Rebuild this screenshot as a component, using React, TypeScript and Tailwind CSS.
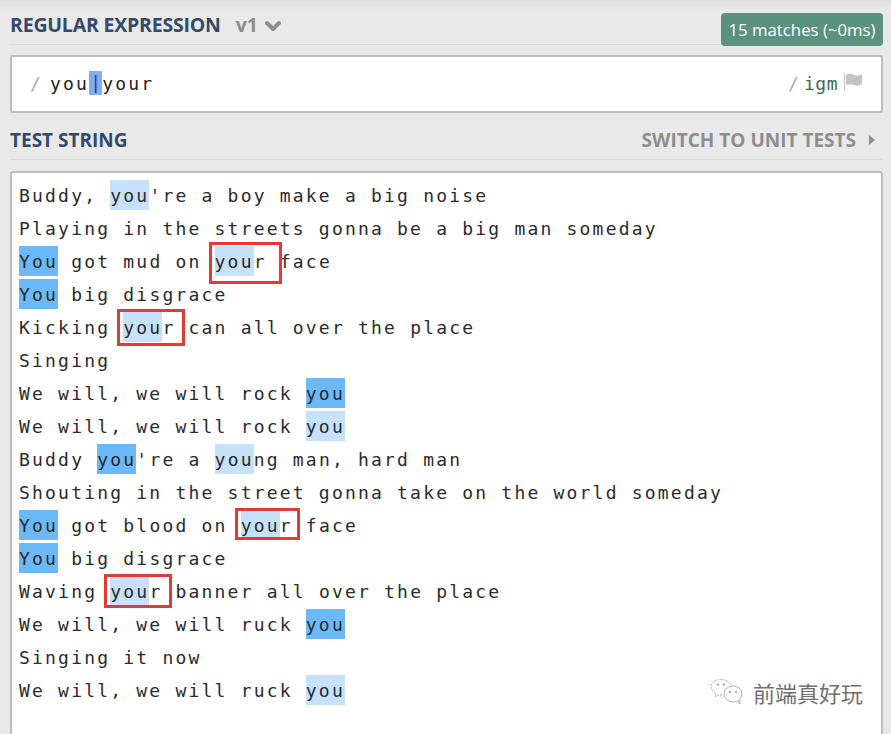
import { ChevronDown } from "lucide-react";
import type { ReactNode } from "react";

function Dark({ children }: { children: ReactNode }) {
  return <span className="inline-block h-[30px] bg-[#6cb9f9] pt-[1px] leading-[29px]">{children}</span>;
}

function Light({ children }: { children: ReactNode }) {
  return <span className="inline-block h-[30px] bg-[#c5e1fb] pt-[1px] leading-[29px]">{children}</span>;
}

// red annotation drawn over the match
function Marked({ children, box }: { children: ReactNode; box: string }) {
  return (
    <span className="relative inline-block">
      {children}
      <span className={"absolute border-[3px] border-[#e53935] " + box} />
    </span>
  );
}

const lines: ReactNode[] = [
  <>Buddy, <Light>you</Light>'re a boy make a big noise</>,
  <>Playing in the streets gonna be a big man someday</>,
  <><Dark>You</Dark> got mud on <Marked box="-left-[6px] -right-[15px] -top-[4px] h-[42px]"><Light>you</Light>r</Marked> face</>,
  <><Dark>You</Dark> big disgrace</>,
  <>Kicking <Marked box="-left-[6px] -right-[10px] -top-[3px] h-[37px]"><Light>you</Light>r</Marked> can all over the place</>,
  <>Singing</>,
  <>We will, we will rock <Dark>you</Dark></>,
  <>We will, we will rock <Light>you</Light></>,
  <>Buddy <Dark>you</Dark>'re a <Light>you</Light>ng man, hard man</>,
  <>Shouting in the street gonna take on the world someday</>,
  <><Dark>You</Dark> got blood on <Marked box="-left-[6px] -right-[7px] -top-[2px] h-[32px]"><Light>you</Light>r</Marked> face</>,
  <><Dark>You</Dark> big disgrace</>,
  <>Waving <Marked box="-left-[6px] -right-[10px] -top-[2px] h-[34px]"><Light>you</Light>r</Marked> banner all over the place</>,
  <>We will, we will ruck <Dark>you</Dark></>,
  <>Singing it now</>,
  <>We will, we will ruck <Light>you</Light></>,
];

export default function App() {
  return (
    <div className="relative h-[734px] w-[891px] overflow-hidden bg-[#e9e9e9] font-['Open_Sans',sans-serif]">
      <div className="h-[10px] bg-gradient-to-b from-[#dcdcdc] to-[#e9e9e9]" />

      {/* regular expression header */}
      <div className="ml-[10px] mr-[8px] flex h-[35px] items-start justify-between border-b border-[#dcdcdc]">
        <div className="flex items-center pt-[2px]">
          <span className="text-[19.500px] leading-[26px] font-bold tracking-[-0.2px] text-[#34496b]">REGULAR EXPRESSION</span>
          <span className="ml-[15px] text-[19.500px] leading-[26px] font-bold text-[#8e8e8e]">v1</span>
          <ChevronDown className="ml-[3px] mt-[1px] h-[24px] w-[24px] text-[#8e8e8e]" strokeWidth={4} />
        </div>
        <div className="mt-[3px] flex h-[33px] w-[162px] items-center justify-center rounded-[4px] bg-[#5b917f] text-[16.800px] text-white">
          15 matches (~0ms)
        </div>
      </div>

      <div className="ml-[10px] mr-[8px] mt-[10px] flex h-[58px] items-center rounded-[3px] border-[2px] border-[#bdbdbd] bg-white pb-[2px] pl-[18px] pr-[17px] font-['DejaVu_Sans_Mono',monospace] text-[18px] tracking-[2.200px]">
        <span className="mr-[7px] text-[#aaaaaa]">/</span>
        <span className="text-[#222222]">you</span>
        <span className="inline-block h-[24px] w-[13px] bg-[#81aef0] text-center leading-[24px] tracking-normal text-[#2a3f66]">|</span>
        <span className="text-[#222222]">your</span>
        <span className="ml-auto text-[#aaaaaa]">/</span>
        <span className="ml-[3px] tracking-[0.500px] text-[#44664f]">igm</span>
        <svg className="ml-[6px] mb-[2px]" width="20" height="18" viewBox="0 0 20 18" fill="#c4c4c4">
          <rect x="0" y="0" width="1" height="18" />
          <path d="M2 2c3-2 5-1 8 0s5 1 8-1v10c-3 2-5 2-8 1s-5-1-8 0z" />
        </svg>
      </div>

      {/* test string header */}
      <div className="ml-[10px] mr-[9px] mt-[14px] flex h-[33px] items-start justify-between border-b border-[#dcdcdc]">
        <span className="text-[19px] leading-[26px] font-bold text-[#34496b]">TEST STRING</span>
        <div className="flex items-center">
          <span className="text-[19px] leading-[26px] font-bold text-[#8e8e8e]">SWITCH TO UNIT TESTS</span>
          <span className="ml-[13px] mr-[7px] h-0 w-0 border-y-[5px] border-l-[6px] border-y-transparent border-l-[#8e8e8e]" />
        </div>
      </div>

      <div className="ml-[10px] mr-[8px] mt-[11px] h-[600px] rounded-[3px] border-[2px] border-[#bdbdbd] bg-white pl-[7px] pt-[7px] font-['DejaVu_Sans_Mono',monospace] text-[18px] tracking-[2.200px] text-[#2b2b2b]">
        {lines.map((line, i) => (
          <div key={i} className="h-[33px] whitespace-pre leading-[32px]">
            {line}
          </div>
        ))}
      </div>

      {/* watermark */}
      <div className="absolute left-[709px] top-[678px] flex items-center">
        <svg width="38" height="28" viewBox="0 0 38 28" fill="none" stroke="#9a9a9a" strokeWidth="0.8">
          <path d="M13 17c-1 0-2 0-3-.4L6 19l1-3.500C4 14 2 11.500 2 9c0-4 4-7.500 10-7.500 5 0 9 2.500 10 6" strokeDasharray="2 1" />
          <ellipse cx="24" cy="16" rx="9" ry="8" />
          <path d="M29 23l2 3-.2-4" />
          <circle cx="21" cy="14" r="0.8" fill="#9a9a9a" />
          <circle cx="27" cy="14" r="0.8" fill="#9a9a9a" />
          <circle cx="9" cy="6.500" r="0.8" fill="#9a9a9a" />
          <circle cx="15" cy="6.500" r="0.8" fill="#9a9a9a" />
        </svg>
        <span className="ml-[6px] font-['Noto_Sans_CJK_SC',sans-serif] text-[22px] leading-[28px] text-[#6f6f6f]">前端真好玩</span>
      </div>
    </div>
  );
}
